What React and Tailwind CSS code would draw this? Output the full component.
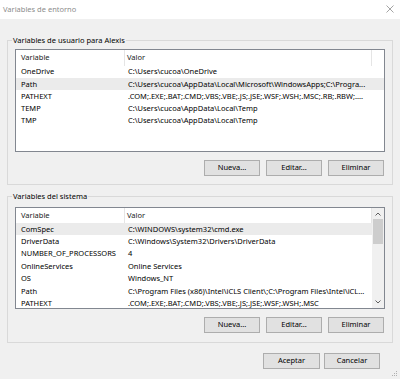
import React from "react";

const font = { fontFamily: '"Noto Sans", "Open Sans", sans-serif' };

function Btn({ children, w = "w-[56px]" }) {
  return (
    <div className={`${w} h-[16px] flex items-center justify-center bg-[#e1e1e1] border border-[#adadad] text-[7.5px] text-black`}>
      {children}
    </div>
  );
}

function Header() {
  return (
    <div className="flex h-full text-[7.5px] text-[#1a1a1a]">
      <div className="w-[109px] shrink-0 pl-[5px] flex items-center border-r border-[#e5e5e5]">Variable</div>
      <div className="w-[247px] shrink-0 pl-[2px] flex items-center border-r border-[#e5e5e5]">Valor</div>
    </div>
  );
}

function Row({ name, value, sel, h }) {
  return (
    <div className={`${h} flex items-center text-[7.5px] text-black whitespace-nowrap ${sel ? "bg-[#ebebeb]" : ""}`}>
      <div className="w-[109px] shrink-0 pl-[5px] overflow-hidden">{name}</div>
      <div className="flex-1 pl-[3px] overflow-hidden">{value}</div>
    </div>
  );
}

export default function App() {
  const user = [
    ["OneDrive", "C:\\Users\\cucoa\\OneDrive"],
    ["Path", "C:\\Users\\cucoa\\AppData\\Local\\Microsoft\\WindowsApps;C:\\Progra...", true],
    ["PATHEXT", ".COM;.EXE;.BAT;.CMD;.VBS;.VBE;.JS;.JSE;.WSF;.WSH;.MSC;.RB;.RBW;...."],
    ["TEMP", "C:\\Users\\cucoa\\AppData\\Local\\Temp"],
    ["TMP", "C:\\Users\\cucoa\\AppData\\Local\\Temp"],
  ];
  const sys = [
    ["ComSpec", "C:\\WINDOWS\\system32\\cmd.exe", true],
    ["DriverData", "C:\\Windows\\System32\\Drivers\\DriverData"],
    ["NUMBER_OF_PROCESSORS", "4"],
    ["OnlineServices", "Online Services"],
    ["OS", "Windows_NT"],
    ["Path", "C:\\Program Files (x86)\\Intel\\iCLS Client\\;C:\\Program Files\\Intel\\iCL..."],
    ["PATHEXT", ".COM;.EXE;.BAT;.CMD;.VBS;.VBE;.JS;.JSE;.WSF;.WSH;.MSC"],
  ];
  return (
    <div className="w-[400px] h-[379px] bg-[#f0f0f0] flex flex-col overflow-hidden relative" style={font}>
      <div className="h-[19px] bg-white flex items-center justify-between pl-[3px] pr-[6px] shrink-0">
        <span className="text-[7.5px] text-[#8c8c8c]">Variables de entorno</span>
        <svg width="8" height="8" viewBox="0 0 8 8" className="mt-[-1px]">
          <path d="M0.5 0.5L7.5 7.5M7.5 0.5L0.5 7.5" stroke="#9a9a9a" strokeWidth="0.9" />
        </svg>
      </div>

      <fieldset className="mt-[16px] mx-[7px] border border-[#d9d9d9] p-0 m-0 min-w-0">
        <legend className="ml-[4px] px-[1px] text-[7.5px] leading-[10px] text-black">Variables de usuario para Alexis</legend>
        <div className="px-[7px] pt-[4px] pb-[8px] flex flex-col">
          <div className="h-[103px] border border-[#828790] bg-white overflow-hidden">
            <div className="h-[16px]"><Header /></div>
            {user.map(([n, v, s]) => (
              <Row key={n} name={n} value={v} sel={s} h="h-[12.2px]" />
            ))}
          </div>
          <div className="mt-[8px] flex justify-end gap-[6px] pr-[1px]">
            <Btn>Nueva...</Btn>
            <Btn>Editar...</Btn>
            <Btn>Eliminar</Btn>
          </div>
        </div>
      </fieldset>

      <fieldset className="mt-[6px] mx-[7px] border border-[#d9d9d9] p-0 m-0 min-w-0">
        <legend className="ml-[4px] px-[1px] text-[7.5px] leading-[10px] text-black">Variables del sistema</legend>
        <div className="px-[7px] pt-[6px] pb-[9px] flex flex-col">
          <div className="h-[102px] border border-[#828790] bg-white overflow-hidden flex">
            <div className="flex-1 min-w-0 flex flex-col">
              <div className="h-[15px] shrink-0"><Header /></div>
              {sys.map(([n, v, s]) => (
                <Row key={n + v} name={n} value={v} sel={s} h="h-[12.4px] shrink-0" />
              ))}
            </div>
            <div className="w-[12px] shrink-0 bg-[#f0f0f0] flex flex-col items-center">
              <svg width="6" height="4" viewBox="0 0 6 4" className="mt-[4px]">
                <path d="M0.5 3.5L3 1L5.5 3.5" stroke="#606060" strokeWidth="1" fill="none" />
              </svg>
              <div className="mt-[3px] w-[10px] h-[25px] bg-[#cdcdcd]" />
              <div className="flex-1" />
              <svg width="6" height="4" viewBox="0 0 6 4" className="mb-[4px]">
                <path d="M0.5 0.5L3 3L5.5 0.5" stroke="#606060" strokeWidth="1" fill="none" />
              </svg>
            </div>
          </div>
          <div className="mt-[8px] flex justify-end gap-[6px] pr-[1px]">
            <Btn>Nueva...</Btn>
            <Btn>Editar...</Btn>
            <Btn>Eliminar</Btn>
          </div>
        </div>
      </fieldset>

      <div className="mt-[10px] flex justify-end gap-[4px] pr-[20px]">
        <Btn w="w-[57px]">Aceptar</Btn>
        <Btn>Cancelar</Btn>
      </div>

      <svg width="6" height="6" viewBox="0 0 6 6" className="absolute right-[2px] bottom-[2px]">
        <rect x="4" y="0" width="1" height="1" fill="#b0b0b0" />
        <rect x="2" y="2" width="1" height="1" fill="#b0b0b0" />
        <rect x="4" y="2" width="1" height="1" fill="#b0b0b0" />
        <rect x="0" y="4" width="1" height="1" fill="#b0b0b0" />
        <rect x="2" y="4" width="1" height="1" fill="#b0b0b0" />
        <rect x="4" y="4" width="1" height="1" fill="#b0b0b0" />
      </svg>
    </div>
  );
}
